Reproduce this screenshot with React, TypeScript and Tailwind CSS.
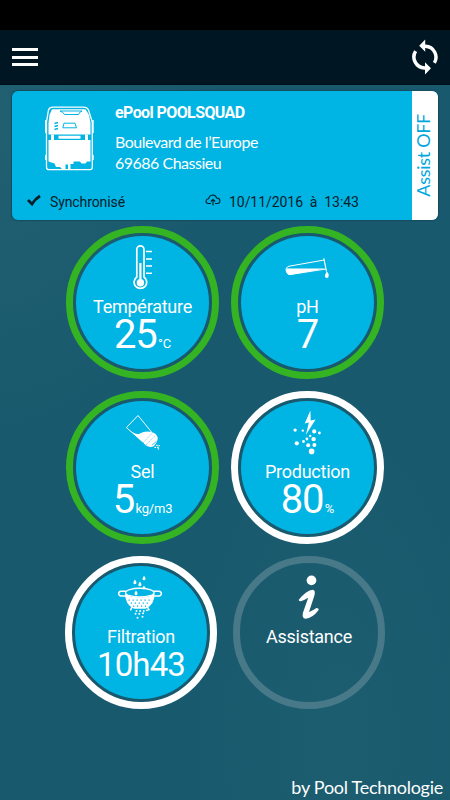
import React from "react";

type GaugeProps = {
  label: string;
  value?: string;
  unit?: string;
  ring: string;
  fill: string;
  className?: string;
  valueClass?: string;
  children: React.ReactNode;
};

function Gauge({ label, value, unit, ring, fill, className = "w-[153px]", valueClass = "text-[40px] tracking-[-1.2px]", children }: GaugeProps) {
  return (
    <div className={`h-[153px] rounded-full border-[7px] p-[3px] ${ring} ${className}`}>
      <div className={`flex h-full w-full flex-col items-center rounded-full ${fill}`}>
        <div className="h-[60px] w-full">{children}</div>
        <div className="h-[22px] text-[18px] leading-[22px] tracking-[-0.25px] whitespace-nowrap">{label}</div>
        {value && (
          <div className="flex h-[34px] items-baseline leading-[34px] whitespace-nowrap">
            <span className={valueClass}>{value}</span>
            {unit && <span className="ml-[1.5px] text-[13px] tracking-[-0.2px]">{unit}</span>}
          </div>
        )}
      </div>
    </div>
  );
}

function Device() {
  return (
    <svg width="50" height="66" viewBox="0 0 50 66" fill="none">
      <path d="M4.5 4Q5.5 1.2 9 1.2H39.5Q43 1.2 44.5 4L48.3 16V61Q48.3 63.6 46 63.6H5Q2.5 63.6 2.5 61V16Z" stroke="#fff" strokeWidth="1.3" />
      <path d="M8 3.2H41.5L45 9L46.5 17V28.5H4.5V17L5.5 9Z" fill="#fff" />
      <path d="M4.5 34H46.5V55.5H43L41.5 57.5H37.5L36 55.5H29.5V58H26.5V63H24V58.5H21.5V63H18L16 61H12L10.5 57.5L4.5 55.5Z" fill="#fff" />
      <path d="M7 28.5H10V34H7ZM41 28.5H44V34H41ZM14.5 29.8H36.5V32.8H14.5Z" fill="#fff" />
      <path d="M16 5H38Q35.5 5.7 34.5 8.5H20.5Q19 5.7 16 5" stroke="#00b4e3" strokeWidth="1" />
      <path d="M20 17.2H31L32.5 21.8H18.8L20 17.2Z" stroke="#00b4e3" strokeWidth="1" />
      <path d="M10.5 17.5L14 16.5M10.5 20.5L14 19.5M10.5 23.5L14 22.5" stroke="#00b4e3" strokeWidth="1.5" />
      <path d="M1.8 14V27M49 14V27M1.8 49V54M49 49V54" stroke="#fff" strokeWidth="1.4" />
    </svg>
  );
}

function Thermometer() {
  return (
    <svg className="h-full w-full" viewBox="76 236 133 60" fill="none" stroke="#fff">
      <path d="M136.8 277V249.5a3.6 3.6 0 0 1 7.2 0V277a6.3 6.3 0 1 1-7.2 0Z" strokeWidth="1.7" />
      <path d="M140.4 263V280" strokeWidth="2.2" />
      <circle cx="140.4" cy="282.7" r="3.7" fill="#fff" stroke="none" />
      <path d="M146 251.5h6M146 259h6M146 266h6M146 273.3h6" strokeWidth="1.5" />
    </svg>
  );
}

function TestTube() {
  return (
    <svg className="h-full w-full" viewBox="241 236 133 60" fill="none">
      <path d="M324.3 260L289 266.2Q285.3 267.5 286.3 271.3Q287.3 275 291 274.4L326 269" stroke="#fff" strokeWidth="1" />
      <path d="M286.2 268.5H325.5L290 275Q286 274.5 286.2 268.5Z" fill="#fff" />
      <path d="M323.8 258.4L326.5 271.5" stroke="#fff" strokeWidth="1.2" />
      <path d="M327 271.5Q329.2 274 328.6 275.5A1.9 1.9 0 1 1 325.2 275Q325.2 273.5 327 271.5Z" fill="#fff" />
    </svg>
  );
}

function Salt() {
  return (
    <svg className="h-full w-full" viewBox="76 401 133 60" fill="none">
      <path d="M138 415.5L126.4 427.6L142 441M138 415.5L151.5 432" stroke="#fff" strokeWidth="1" />
      <path d="M129 429.6Q135.5 435.5 140 433.5Q145 430.5 151.5 432Q157.5 433.5 157.8 439Q157 443 154 446Q150 448 146 445.5Z" fill="#fff" />
      <path d="M143 443L152.5 432.5M146 445L155 435.5" stroke="#00b4e3" strokeWidth=".5" strokeDasharray="1.4 .8" />
      <path d="M152.2 445L156.5 441.4" stroke="#00b4e3" strokeWidth=".8" />
      <path d="M154.5 447.3h1.6m.2-2h1.4m-.6 2h1.6m-1 1.6h1.4m-.6-3.2h1.2" stroke="#fff" strokeWidth="1.3" />
    </svg>
  );
}

function Electrolysis() {
  return (
    <svg className="h-full w-full" viewBox="241 401 133 60" fill="#fff">
      <path d="M310.4 410.6L304.7 423.5L308.9 422.4L305.8 435L315.6 419.4L310.7 420.5Z" />
      <circle cx="295.1" cy="430.1" r="1.7" />
      <circle cx="302.8" cy="430.6" r="1.2" />
      <circle cx="314.2" cy="431.4" r="2.1" />
      <circle cx="319.4" cy="433" r="1.4" />
      <circle cx="310.2" cy="436" r="1.2" />
      <circle cx="306.9" cy="439" r="1.4" />
      <circle cx="313.6" cy="439.1" r="2.2" />
      <circle cx="303.5" cy="441.5" r="1.4" />
      <circle cx="296.8" cy="443.3" r="2.1" />
      <circle cx="308.2" cy="445.3" r="2" />
      <circle cx="314.4" cy="445.1" r="2" />
      <circle cx="311.6" cy="451.4" r="2.8" />
    </svg>
  );
}

function Colander() {
  return (
    <svg className="h-full w-full" viewBox="75 566 133 60" fill="none">
      <path d="M126.5 591.3H121.5Q119 591.5 119 593.6Q119 596 121.5 596H127M154 591.3H159.5Q162 591.5 162 593.6Q162 596 159.5 596H153.5" stroke="#fff" strokeWidth="1.5" />
      <path d="M125.3 592.5C127 599 153.5 599 155.3 592.5Q155.5 605 146 608.8H134.5Q125.3 605 125.3 592.5Z" fill="#fff" />
      <ellipse cx="140.3" cy="592.6" rx="14.3" ry="4.4" fill="#00b4e3" stroke="#fff" strokeWidth="1.3" />
      <path d="M129 600.2H153M133.5 606.2H148" stroke="#00b4e3" strokeWidth="1.1" strokeDasharray="1.2 2.8" />
      <path d="M131.2 603.2H150" stroke="#00b4e3" strokeWidth="1.1" strokeDasharray="1.2 2.8" />
      <path d="M132.8 606.5L130.8 610.5M147.8 606.5L149.8 610.5" stroke="#fff" strokeWidth="1.5" />
      <path d="M135.3 579.5q2.2 2.8 1.4 3.9a1.6 1.6 0 0 1-2.8 0q-.4-1.2 1.4-3.9Zm9.2-4q2.2 2.8 1.4 3.9a1.6 1.6 0 0 1-2.8 0q-.4-1.2 1.4-3.9Zm-4.2 6q2.2 2.8 1.4 3.9a1.6 1.6 0 0 1-2.8 0q-.4-1.2 1.4-3.9Zm-3.9 9q2.2 2.8 1.4 3.9a1.6 1.6 0 0 1-2.8 0q-.4-1.2 1.4-3.9Zm8.1-5q2 2.6 1.5 3.8h-3q-.4-1.1 1.5-3.8Z" fill="#fff" />
      <g fill="#fff">
        <circle cx="137" cy="611" r="1" />
        <circle cx="140.7" cy="611" r="1" />
        <circle cx="144.3" cy="611" r="1" />
        <circle cx="147.5" cy="610.3" r="1" />
        <circle cx="136" cy="614" r="1" />
        <circle cx="139.8" cy="614" r="1" />
        <circle cx="143.6" cy="613.4" r="1" />
        <circle cx="138" cy="618" r="1" />
        <circle cx="143" cy="617" r="1" />
      </g>
    </svg>
  );
}

function Info() {
  return (
    <svg className="h-full w-full" viewBox="243 566 133 60" fill="#fff">
      <circle cx="312" cy="580.3" r="4.9" />
      <path d="M299 600Q307 590.3 313.5 589.8Q316.5 590.5 314.8 596L309.5 612Q313 610.8 317 608Q319.5 608 319.2 610.2Q313 618.5 306 619Q302 618.8 303.4 613L308.7 597.7Q305 599.8 301.5 601.4Q299.7 601.5 299 600Z" />
    </svg>
  );
}

export default function App() {
  return (
    <div className="flex h-[800px] w-[450px] flex-col overflow-hidden bg-[#19596d] bg-[radial-gradient(ellipse_at_0%_15%,#216071_0%,transparent_35%),radial-gradient(ellipse_at_75%_92%,#1c5d70_0%,transparent_35%)] font-['Roboto',sans-serif] text-white">
      <div className="h-[30px] shrink-0 bg-black" />
      <header className="flex h-[55px] shrink-0 items-center justify-between border-b border-[#03101a] bg-[#001622] pr-[11px] pl-3">
        <div className="flex flex-col gap-[4.5px]">
          <div className="h-[3px] w-[26px] bg-white" />
          <div className="h-[3px] w-[26px] bg-white" />
          <div className="h-[3px] w-[26px] bg-white" />
        </div>
        <svg width="28" height="36" viewBox="0 0 28 36" fill="none" stroke="#fff" strokeWidth="3.5">
          <path d="M12.5 7.2H14.5A11 11 0 0 1 23.4 23.8" />
          <path d="M15.5 29H13.5A11 11 0 0 1 4.6 12.2" />
          <path d="M8.2 6.7L14.2 .6V12.8ZM20 29.3L14 23.3V35.5Z" fill="#fff" stroke="none" />
        </svg>
      </header>

      <section className="mx-3 mt-1.5 flex h-[129px] w-[426px] shrink-0 overflow-hidden rounded-[6px] bg-[#00b4e3] shadow-[0_0_1px_1px_#174c60]">
        <div className="flex w-[400px] shrink-0 flex-col">
          <div className="flex h-[97px]">
            <div className="w-[103px] pt-[15px] pl-8"><Device /></div>
            <div className="pt-[11px] font-['Lato',sans-serif] text-[16px] leading-[21px] tracking-[-0.5px]">
              <div className="mb-2 font-['Roboto',sans-serif] text-[16px] leading-[21px] font-bold tracking-[-0.6px]">ePool POOLSQUAD</div>
              <div>Boulevard de l’Europe</div>
              <div>69686 Chassieu</div>
            </div>
          </div>
          <div className="flex h-7 items-center text-[14px] text-[#06202b]">
            <svg className="-mt-1 ml-[15px]" width="14" height="12" viewBox="0 0 14 12"><path d="M1 6L5 10Q8 5 13 2" fill="none" stroke="#06202b" strokeWidth="2.8" /></svg>
            <span className="ml-[9px] w-[155px] tracking-[-0.1px]">Synchronisé</span>
            <svg className="-mt-1" width="16" height="12" viewBox="0 0 16 12" fill="none" stroke="#06202b" strokeWidth="1.1"><path d="M6 9.5H3.3Q1 9.3 1 7Q1.3 4.9 3.6 4.8Q4.2 1.3 7.8 1Q10.7 1 11.7 4Q14.9 4.2 15 7Q14.6 9.5 12.5 9.5H10M8 11.5V5.5M5.8 7.5L8 5.4L10.2 7.5" /></svg>
            <span className="ml-2 tracking-[-0.05px] whitespace-pre">10/11/2016  à  13:43</span>
          </div>
        </div>
        <div className="flex w-[26px] items-center justify-center bg-white">
          <span className="rotate-180 pl-1 font-['Lato',sans-serif] text-[18px] leading-[22px] tracking-[-0.3px] whitespace-nowrap text-[#00a7dc] [writing-mode:vertical-rl]">Assist OFF</span>
        </div>
      </section>

      <main className="mt-1.5 ml-[66px] grid shrink-0 grid-cols-[165px_165px] grid-rows-[165px_165px_165px]">
        <Gauge label="Température" value="25" unit="°C" ring="border-[#34b323]" fill="bg-[#00b4e3]"><Thermometer /></Gauge>
        <Gauge label="pH" value="7" ring="border-[#34b323]" fill="bg-[#00b4e3]"><TestTube /></Gauge>
        <Gauge label="Sel" value="5" unit="kg/m3" ring="border-[#34b323]" fill="bg-[#00b4e3]"><Salt /></Gauge>
        <Gauge label="Production" value="80" unit="%" ring="border-white" fill="bg-[#00b4e3]"><Electrolysis /></Gauge>
        <Gauge label="Filtration" value="10h43" ring="border-white" fill="bg-[#00b4e3]" className="-ml-px w-[152px]" valueClass="text-[33px] tracking-[-0.9px]"><Colander /></Gauge>
        <Gauge label="Assistance" ring="border-[#477989]" fill="bg-transparent" className="ml-0.5 w-[152px]"><Info /></Gauge>
      </main>

      <footer className="mt-auto pr-[7px] pb-0.5 text-right font-['Lato',sans-serif] text-[18px] leading-[22px] tracking-[-0.27px]">by Pool Technologie</footer>
    </div>
  );
}
